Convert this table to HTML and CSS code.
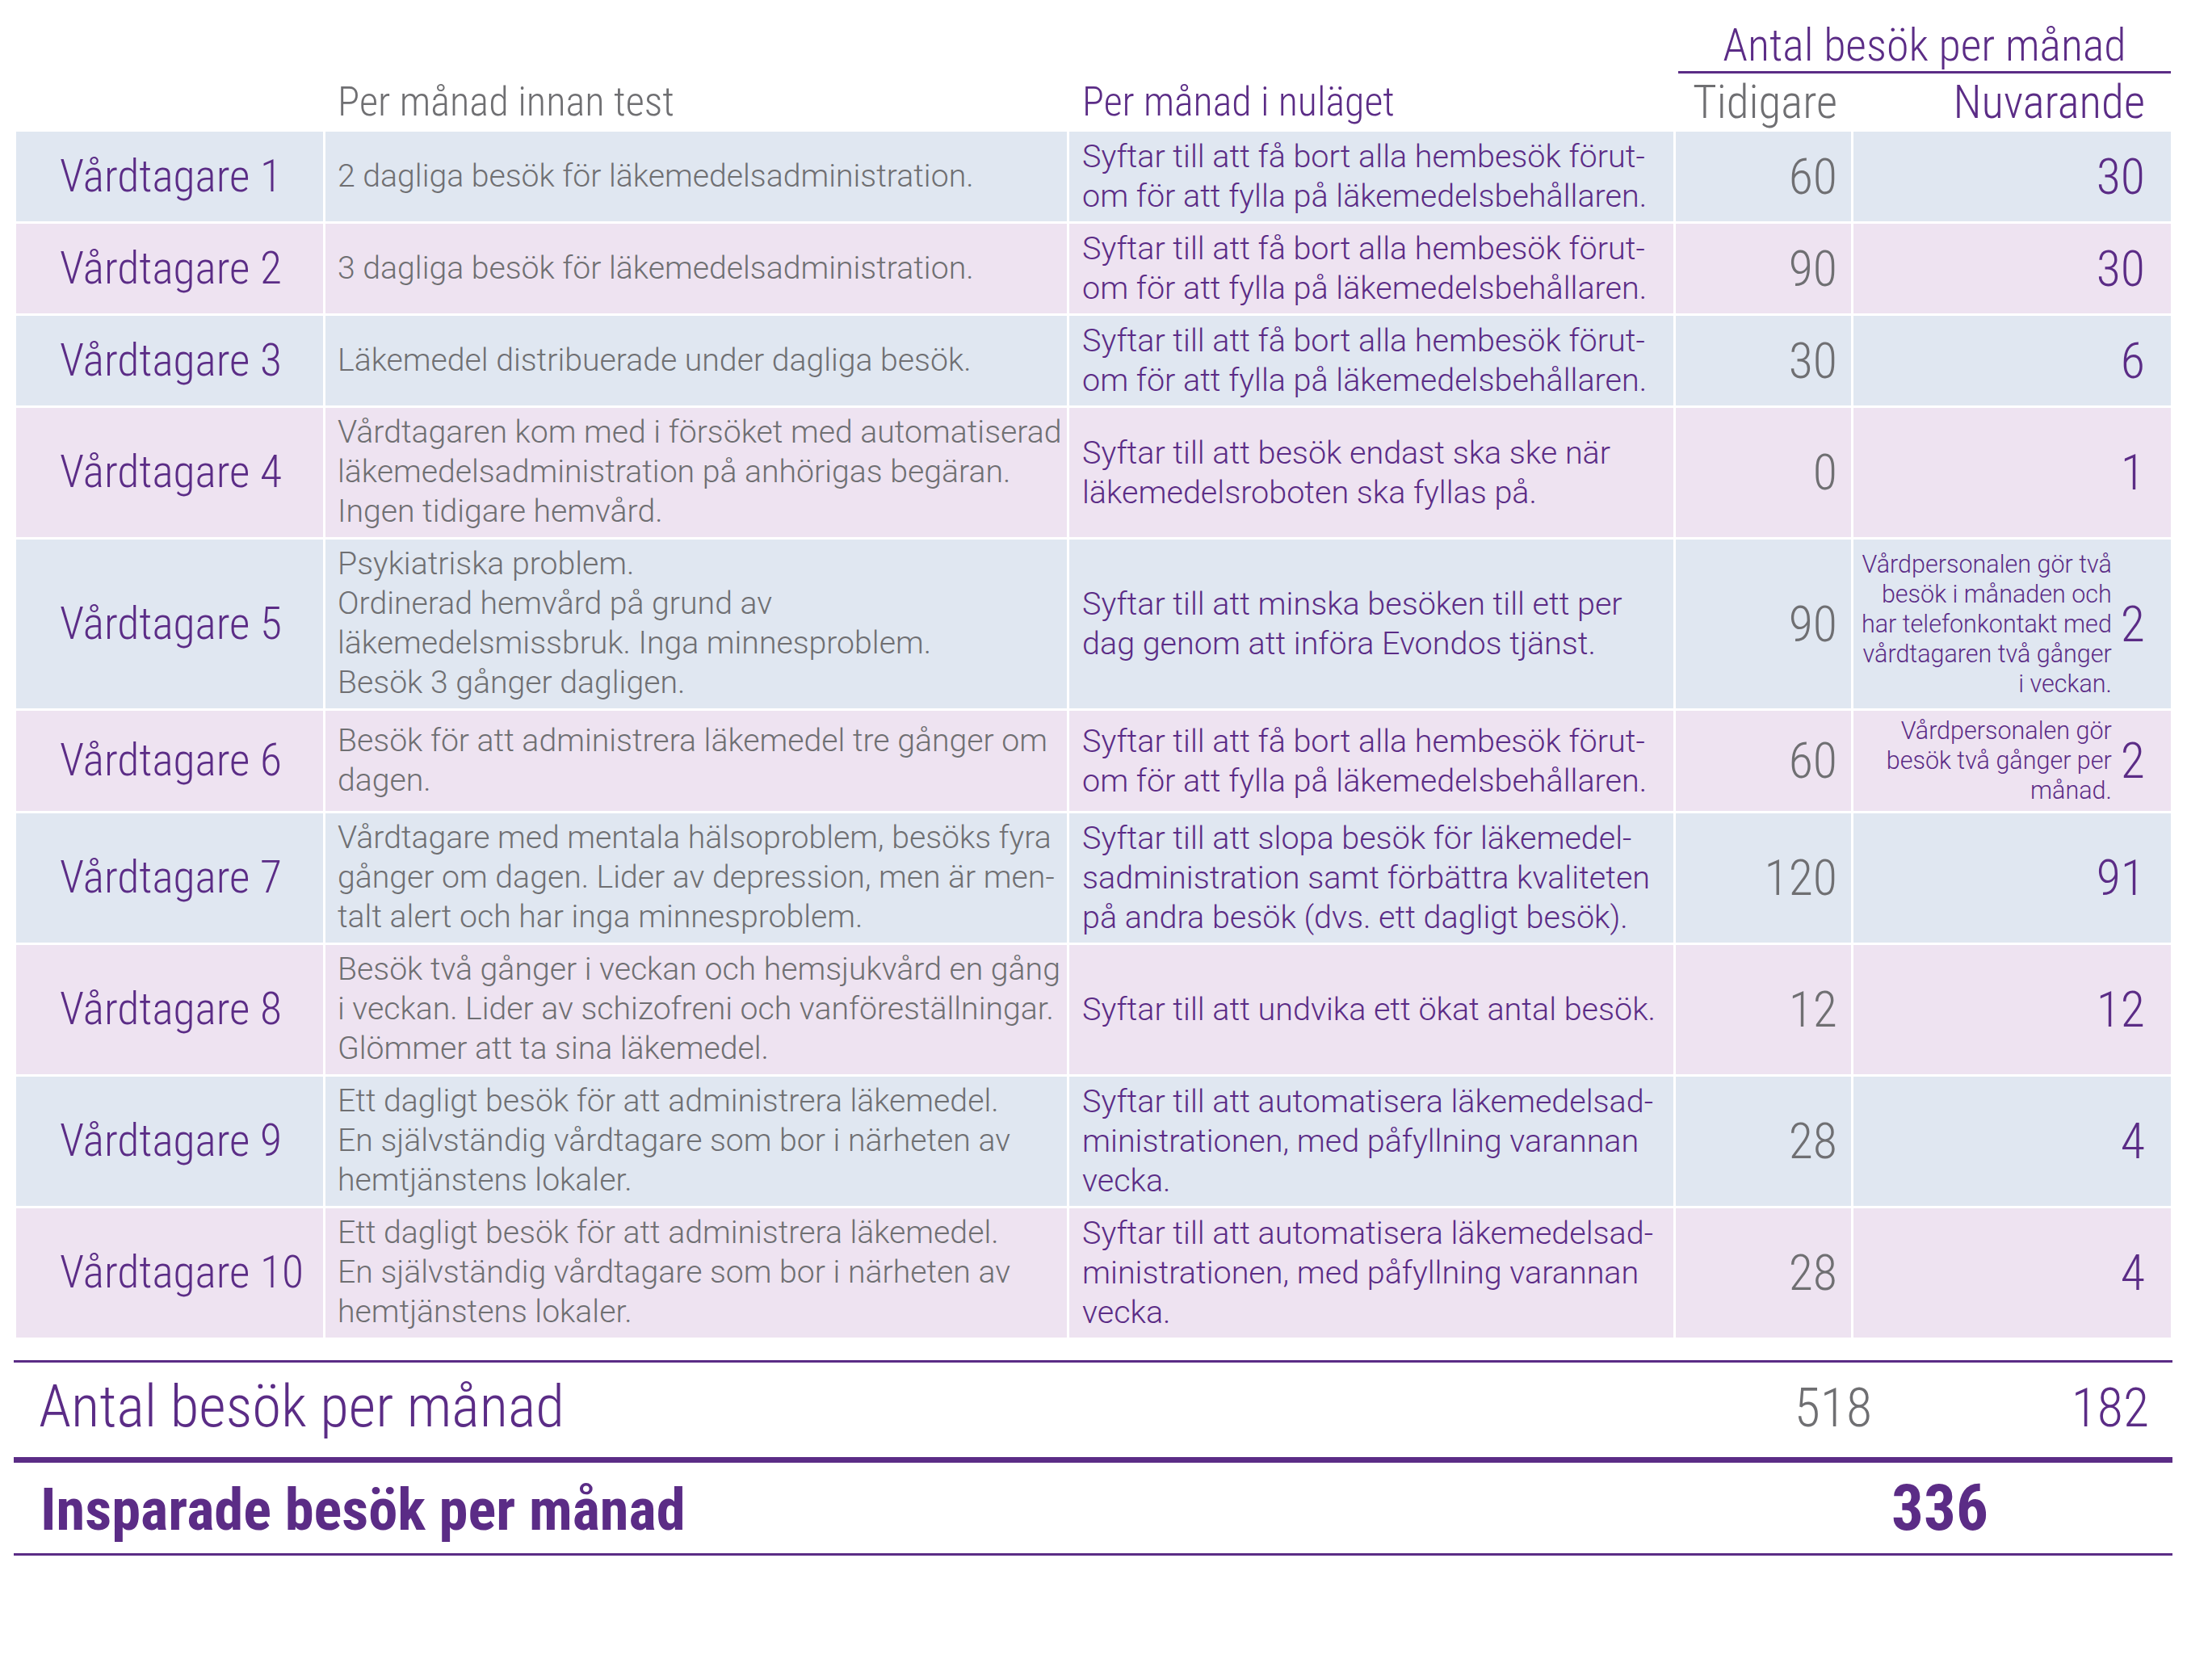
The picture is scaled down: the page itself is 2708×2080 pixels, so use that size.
FILE: index.html
```html
<!DOCTYPE html>
<html lang="sv">
<head>
<meta charset="utf-8">
<title>Antal besök per månad</title>
<link rel="stylesheet" href="styles.css">
</head>
<body>
<div class="page">
  <div class="grid head">
    <div class="head-span">Antal besök per månad</div>
  </div>
  <div class="grid heads">
    <div></div>
    <div class="h h2">Per månad innan test</div>
    <div class="h h3">Per månad i nuläget</div>
    <div class="h h4">Tidigare</div>
    <div class="h h5">Nuvarande</div>
  </div>

  <div class="rows">
    <div class="grid row blue">
      <div class="c c1">Vårdtagare 1</div>
      <div class="c c2">2 dagliga besök för läkemedelsadministration.</div>
      <div class="c c3">Syftar till att få bort alla hembesök förut-<br>om för att fylla på läkemedelsbehållaren.</div>
      <div class="c c4">60</div>
      <div class="c c5">30</div>
    </div>
    <div class="grid row pink">
      <div class="c c1">Vårdtagare 2</div>
      <div class="c c2">3 dagliga besök för läkemedelsadministration.</div>
      <div class="c c3">Syftar till att få bort alla hembesök förut-<br>om för att fylla på läkemedelsbehållaren.</div>
      <div class="c c4">90</div>
      <div class="c c5">30</div>
    </div>
    <div class="grid row blue">
      <div class="c c1">Vårdtagare 3</div>
      <div class="c c2">Läkemedel distribuerade under dagliga besök.</div>
      <div class="c c3">Syftar till att få bort alla hembesök förut-<br>om för att fylla på läkemedelsbehållaren.</div>
      <div class="c c4">30</div>
      <div class="c c5">6</div>
    </div>
    <div class="grid row pink">
      <div class="c c1">Vårdtagare 4</div>
      <div class="c c2">Vårdtagaren kom med i försöket med automatiserad<br>läkemedelsadministration på anhörigas begäran.<br>Ingen tidigare hemvård.</div>
      <div class="c c3">Syftar till att besök endast ska ske när<br>läkemedelsroboten ska fyllas på.</div>
      <div class="c c4">0</div>
      <div class="c c5">1</div>
    </div>
    <div class="grid row blue">
      <div class="c c1">Vårdtagare 5</div>
      <div class="c c2">Psykiatriska problem.<br>Ordinerad hemvård på grund av<br>läkemedelsmissbruk. Inga minnesproblem.<br>Besök 3 gånger dagligen.</div>
      <div class="c c3">Syftar till att minska besöken till ett per<br>dag genom att införa Evondos tjänst.</div>
      <div class="c c4">90</div>
      <div class="c c5"><span class="note">Vårdpersonalen gör två<br>besök i månaden och<br>har telefonkontakt med<br>vårdtagaren två gånger<br>i veckan.</span><span>2</span></div>
    </div>
    <div class="grid row pink">
      <div class="c c1">Vårdtagare 6</div>
      <div class="c c2">Besök för att administrera läkemedel tre gånger om<br>dagen.</div>
      <div class="c c3">Syftar till att få bort alla hembesök förut-<br>om för att fylla på läkemedelsbehållaren.</div>
      <div class="c c4">60</div>
      <div class="c c5"><span class="note">Vårdpersonalen gör<br>besök två gånger per<br>månad.</span><span>2</span></div>
    </div>
    <div class="grid row blue">
      <div class="c c1">Vårdtagare 7</div>
      <div class="c c2">Vårdtagare med mentala hälsoproblem, besöks fyra<br>gånger om dagen. Lider av depression, men är men-<br>talt alert och har inga minnesproblem.</div>
      <div class="c c3">Syftar till att slopa besök för läkemedel-<br>sadministration samt förbättra kvaliteten<br>på andra besök (dvs. ett dagligt besök).</div>
      <div class="c c4">120</div>
      <div class="c c5">91</div>
    </div>
    <div class="grid row pink">
      <div class="c c1">Vårdtagare 8</div>
      <div class="c c2">Besök två gånger i veckan och hemsjukvård en gång<br>i veckan. Lider av schizofreni och vanföreställningar.<br>Glömmer att ta sina läkemedel.</div>
      <div class="c c3">Syftar till att undvika ett ökat antal besök.</div>
      <div class="c c4">12</div>
      <div class="c c5">12</div>
    </div>
    <div class="grid row blue">
      <div class="c c1">Vårdtagare 9</div>
      <div class="c c2">Ett dagligt besök för att administrera läkemedel.<br>En självständig vårdtagare som bor i närheten av<br>hemtjänstens lokaler.</div>
      <div class="c c3">Syftar till att automatisera läkemedelsad-<br>ministrationen, med påfyllning varannan<br>vecka.</div>
      <div class="c c4">28</div>
      <div class="c c5">4</div>
    </div>
    <div class="grid row pink">
      <div class="c c1">Vårdtagare 10</div>
      <div class="c c2">Ett dagligt besök för att administrera läkemedel.<br>En självständig vårdtagare som bor i närheten av<br>hemtjänstens lokaler.</div>
      <div class="c c3">Syftar till att automatisera läkemedelsad-<br>ministrationen, med påfyllning varannan<br>vecka.</div>
      <div class="c c4">28</div>
      <div class="c c5">4</div>
    </div>
  </div>

  <div class="totals">
    <div class="tot-row">
      <div class="tot-label">Antal besök per månad</div>
      <div class="tot-num grey">518</div>
      <div class="tot-num">182</div>
    </div>
    <div class="saved-row">
      <div class="saved-label">Insparade besök per månad</div>
      <div class="saved-num">336</div>
    </div>
  </div>
</div>
</body>
</html>
```

FILE: styles.css
```css
* { box-sizing: border-box; }

body {
  margin: 0;
  background: #ffffff;
  font-family: Roboto, "Liberation Sans", sans-serif;
  font-weight: 300;
  color: #5b2c86;
}

.page {
  padding: 0 20px;
  width: 2708px;
}

.grid {
  display: grid;
  grid-template-columns: 380px 918px 748px 217px 393px;
  column-gap: 3px;
}

/* condensed display face for titles, names and figures */
.head-span,
.h,
.c1,
.c4,
.c5,
.tot-row,
.saved-row {
  font-family: "Roboto Condensed", Roboto, "Liberation Sans", sans-serif;
}

.head-span {
  grid-column: 4 / 6;
  text-align: center;
  font-size: 56px;
  line-height: 63px;
  padding-top: 25px;
  border-bottom: 3px solid #5b2c86;
  margin-left: 3px;
}

.heads {
  height: 72px;
  align-items: start;
}

.h {
  line-height: 56px;
  white-space: nowrap;
}

.h2 { font-size: 50.5px; color: #6f6f72; padding: 7px 0 0 15px; }
.h3 { font-size: 50px; color: #5b2c86; padding: 7px 0 0 16px; }
.h4 { font-size: 57px; color: #6f6f72; text-align: right; padding: 8px 17px 0 0; }
.h5 { font-size: 57px; color: #5b2c86; text-align: right; padding: 8px 32px 0 0; }

.rows {
  display: flex;
  flex-direction: column;
  gap: 3px;
}

.blue .c { background: #e0e7f1; }
.pink .c { background: #eee3f1; }

.c {
  display: flex;
  align-items: center;
  padding: 6px 16px 7px;
  line-height: 49px;
  white-space: nowrap;
}

.c1 { padding-left: 54px; font-size: 55.5px; color: #5b2c86; }
.c2 { padding-left: 15px; font-size: 39.2px; color: #6f6f72; }
.c3 { padding-left: 16px; font-size: 39.5px; color: #5b2c86; }
.c4 { justify-content: flex-end; padding-right: 17px; font-size: 62px; color: #6f6f72; }
.c5 { justify-content: flex-end; padding-right: 32px; font-size: 62px; color: #5b2c86; gap: 11px; }

.note {
  font-family: Roboto, "Liberation Sans", sans-serif;
  font-size: 30.5px;
  line-height: 37px;
  text-align: right;
}

.totals {
  margin: 28px -2px 0 -3px;
  border-top: 3px solid #5b2c86;
}

.tot-row {
  display: grid;
  grid-template-columns: 1fr 200px 343px;
  align-items: baseline;
  padding: 0 29px 6px 31px;
  line-height: 108px;
  border-bottom: 7px solid #5b2c86;
}

.tot-label { font-size: 73px; }
.tot-num { font-size: 66px; text-align: right; }
.tot-num.grey { color: #6f6f72; }

.saved-row {
  display: grid;
  grid-template-columns: 1fr 236px;
  align-items: baseline;
  padding: 3px 170px 0 33px;
  line-height: 106px;
  font-weight: 700;
  border-bottom: 3px solid #5b2c86;
}

.saved-label { font-size: 72.5px; }
.saved-num { font-size: 79px; text-align: center; }
```
